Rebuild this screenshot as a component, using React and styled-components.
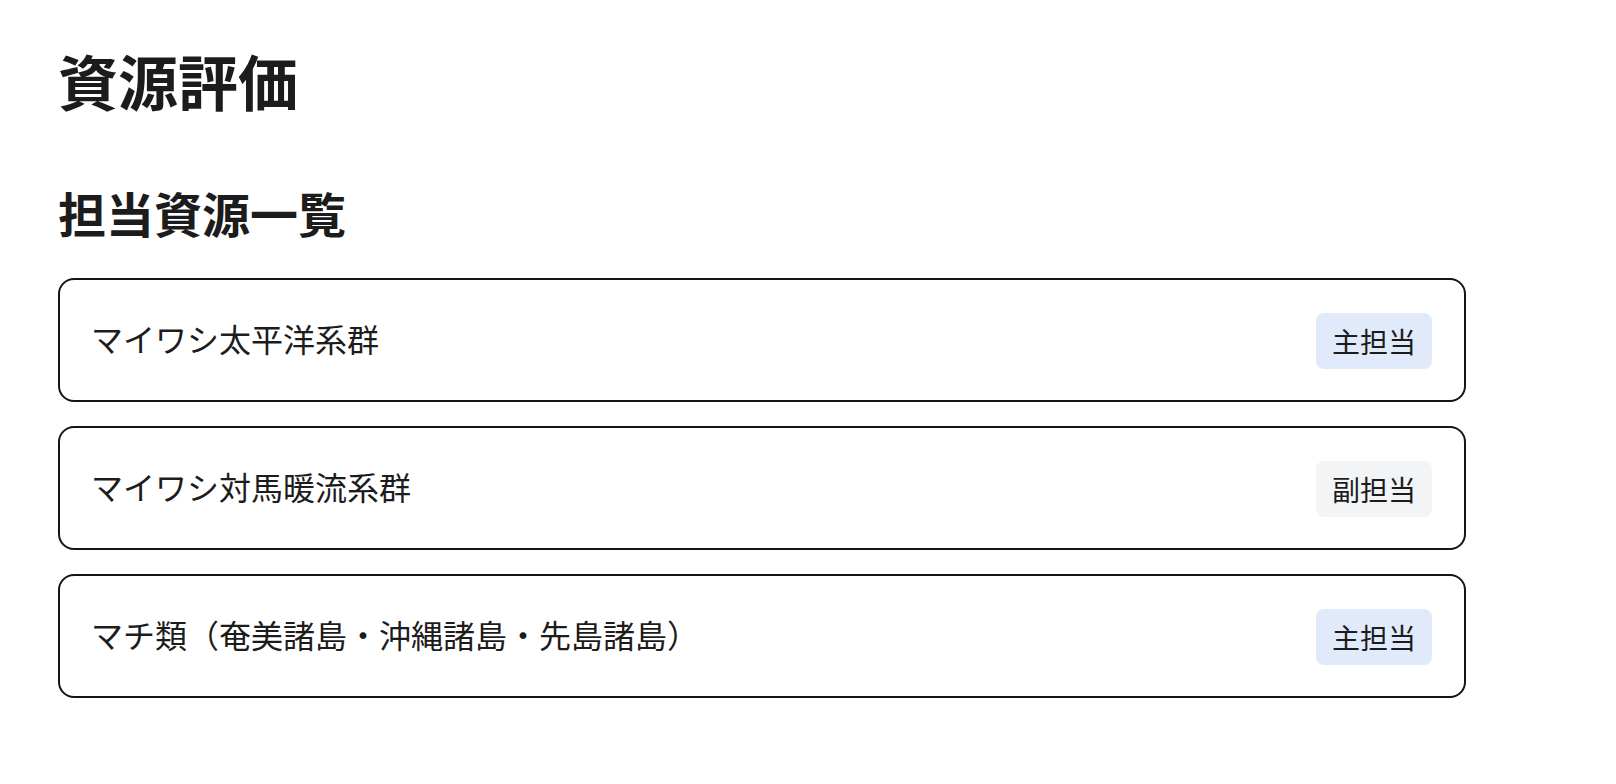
import React from "react";
import styled, { createGlobalStyle } from "styled-components";

const GlobalStyle = createGlobalStyle`
  * { box-sizing: border-box; }
  html, body { margin: 0; padding: 0; background: #ffffff; }
  body {
    font-family: "Noto Sans CJK JP", "Noto Sans", "Liberation Sans", sans-serif;
    color: #1c1c1c;
  }
`;

const Page = styled.main`
  padding: 44px 58px 40px 58px;
`;

const Title = styled.h1`
  margin: 0;
  font-size: 60px;
  line-height: 72px;
  font-weight: 700;
  color: #1c1c1c;
`;

const SectionTitle = styled.h2`
  margin: 67px 0 0 0;
  font-size: 48px;
  line-height: 58px;
  font-weight: 700;
  color: #1c1c1c;
`;

const List = styled.ul`
  list-style: none;
  margin: 37px 0 0 0;
  padding: 0;
  width: 1408px;
  display: flex;
  flex-direction: column;
  gap: 24px;
`;

const Card = styled.li`
  display: flex;
  align-items: center;
  justify-content: space-between;
  padding: 33px 32px 31px 31px;
  border: 2px solid #151515;
  border-radius: 16px;
  background: #ffffff;
`;

const Name = styled.span`
  padding-bottom: 6px;
  font-size: 32px;
  line-height: 44px;
  font-weight: 400;
  color: #1c1c1c;
`;

const Badge = styled.span`
  display: inline-flex;
  align-items: center;
  justify-content: center;
  height: 56px;
  padding: 0 16px;
  border-radius: 8px;
  font-size: 28px;
  line-height: 40px;
  color: #1c1c1c;
  background: ${(p) => (p.$primary ? "#e1eafb" : "#f3f4f6")};
`;

const items = [
  { name: "マイワシ太平洋系群", role: "主担当", primary: true },
  { name: "マイワシ対馬暖流系群", role: "副担当", primary: false },
  { name: "マチ類（奄美諸島・沖縄諸島・先島諸島）", role: "主担当", primary: true },
];

export default function App() {
  return (
    <>
      <GlobalStyle />
      <Page>
        <Title>資源評価</Title>
        <SectionTitle>担当資源一覧</SectionTitle>
        <List>
          {items.map((it) => (
            <Card key={it.name}>
              <Name>{it.name}</Name>
              <Badge $primary={it.primary}>{it.role}</Badge>
            </Card>
          ))}
        </List>
      </Page>
    </>
  );
}
